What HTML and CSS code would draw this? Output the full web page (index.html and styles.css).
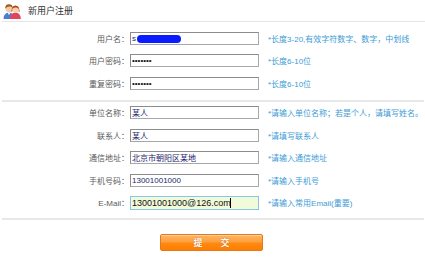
FILE: index.html
```html
<!DOCTYPE html>
<html lang="zh-CN">
<head>
<meta charset="utf-8">
<title>新用户注册</title>
<link rel="stylesheet" href="styles.css">
</head>
<body>
<div class="page">
  <div class="header">
    <svg class="icon" width="18" height="17" viewBox="0 0 18 17">
      <!-- man -->
      <path d="M0.5 17 Q0.5 11 6 10.5 Q11 11 11 17 Z" fill="#4a7fd0"/>
      <path d="M4.5 10.6 L6 13 L7.5 10.6 Z" fill="#fff"/>
      <circle cx="6" cy="6.5" r="3.6" fill="#f6c9a0"/>
      <path d="M2.3 6.5 Q2 2.2 6 2.2 Q10 2.2 9.7 6.5 Q9 4.3 6.5 4.6 Q4 4.6 2.3 6.5 Z" fill="#9a5a2a"/>
      <!-- woman -->
      <path d="M7 17 Q7 11 12.5 10.5 Q17.8 11 17.8 17 Z" fill="#e0455a"/>
      <path d="M8.6 10.5 Q8 4 12.5 3.4 Q17 4 16.4 10.5 Q15 9 15.5 7 L9.5 7 Q10 9 8.6 10.5 Z" fill="#b04a1e"/>
      <circle cx="12.5" cy="7.4" r="3.1" fill="#f8d0aa"/>
      <path d="M9.3 7 Q9.5 3.8 12.5 3.8 Q15.6 3.8 15.7 7 Q14 5.2 12 5.6 Q10.5 6 9.3 7 Z" fill="#b04a1e"/>
    </svg>
    <span class="title">新用户注册</span>
  </div>

  <div class="group first">
    <div class="row">
      <label class="label">用户名：</label>
      <div class="field">
        <input class="input" type="text" value="s">
        <span class="redact"></span>
      </div>
      <span class="hint">*长度3-20,有效字符数字、数字，中划线</span>
    </div>
    <div class="row">
      <label class="label">用户密码：</label>
      <div class="field"><input class="input" type="password" value="1234567"></div>
      <span class="hint">*长度6-10位</span>
    </div>
    <div class="row">
      <label class="label">重复密码：</label>
      <div class="field"><input class="input" type="password" value="1234567"></div>
      <span class="hint">*长度6-10位</span>
    </div>
  </div>

  <div class="sep"></div>

  <div class="group">
    <div class="row">
      <label class="label">单位名称：</label>
      <div class="field"><input class="input" type="text" value="某人"></div>
      <span class="hint">*请输入单位名称；若是个人，请填写姓名。</span>
    </div>
    <div class="row">
      <label class="label">联系人：</label>
      <div class="field"><input class="input" type="text" value="某人"></div>
      <span class="hint">*请填写联系人</span>
    </div>
    <div class="row">
      <label class="label">通信地址：</label>
      <div class="field"><input class="input" type="text" value="北京市朝阳区某地"></div>
      <span class="hint">*请输入通信地址</span>
    </div>
    <div class="row">
      <label class="label">手机号码：</label>
      <div class="field"><input class="input" type="text" value="13001001000"></div>
      <span class="hint">*请输入手机号</span>
    </div>
    <div class="row">
      <label class="label">E-Mail：</label>
      <div class="field"><input class="input email" type="text" value="13001001000@126.com"><span class="caret"></span></div>
      <span class="hint">*请输入常用Email(重要)</span>
    </div>
  </div>

  <div class="sep second"></div>

  <div class="actions">
    <button class="submit" type="button">提　　交</button>
  </div>
</div>
</body>
</html>
```

FILE: styles.css
```css
html, body {
  margin: 0;
  padding: 0;
  background: #ffffff;
}

body {
  font-family: "Liberation Sans", "Noto Sans CJK SC", sans-serif;
  font-size: 8px;
  color: #555;
}

.page {
  width: 425px;
}

.header {
  height: 21px;
  display: flex;
  align-items: center;
  gap: 6px;
  padding-left: 3px;
  border-bottom: 1px solid #e6e6e6;
  margin-left: 2px;
}

.header .icon {
  margin-left: -2px;
}

.title {
  font-size: 9px;
  color: #333;
  padding-left: 1px;
}

.group.first {
  padding-top: 5px;
}

.row {
  height: 22.5px;
  display: grid;
  grid-template-columns: 130px 129px auto;
  align-items: center;
}

.label {
  text-align: right;
  color: #5a5a5a;
  font-size: 8px;
  padding-right: 1px;
}

.field {
  position: relative;
  height: 13px;
  display: flex;
  align-items: center;
}

.input {
  box-sizing: border-box;
  width: 129px;
  height: 13px;
  margin: 0;
  padding: 0 1px;
  border: 1px solid #a8a8a8;
  border-top-color: #8c8c8c;
  border-left-color: #8c8c8c;
  background: #fff;
  font-family: "Liberation Sans", "Noto Sans CJK SC", sans-serif;
  font-size: 8px;
  color: #24246e;
  outline: none;
}

.input[type="password"] {
  color: #111;
  font-size: 8px;
  letter-spacing: 0;
}

.input.email {
  height: 14px;
  font-size: 9px;
  color: #111;
  background: #f1fbd9;
  border: 1px solid #86c6e6;
}

.caret {
  position: absolute;
  left: 100px;
  top: 2px;
  width: 1px;
  height: 10px;
  background: #000;
}

.redact {
  position: absolute;
  left: 7px;
  top: 3px;
  width: 44px;
  height: 8px;
  border-radius: 4px;
  background: #0a1cff;
}

.hint {
  margin-left: 9px;
  color: #3d9bd6;
  font-size: 8px;
  white-space: nowrap;
}

.sep {
  height: 2px;
  margin: 5px 1px 0 2px;
  background: #e8e8e8;
}

.sep.second {
  margin-top: 4px;
}

.actions {
  padding-top: 14px;
  padding-left: 160px;
}

.submit {
  box-sizing: border-box;
  width: 103px;
  height: 17px;
  margin: 0;
  padding: 0;
  border: 1px solid #e07a1c;
  border-radius: 2px;
  background: linear-gradient(#ffb463 0%, #ffa040 45%, #ff8a12 55%, #ff7d00 100%);
  box-shadow: inset 0 1px 0 #ffd09a;
  color: #fff;
  font-family: "Noto Sans CJK SC", sans-serif;
  font-size: 9px;
  font-weight: bold;
  text-shadow: 0 0 1px #b35500;
  cursor: pointer;
}
```
